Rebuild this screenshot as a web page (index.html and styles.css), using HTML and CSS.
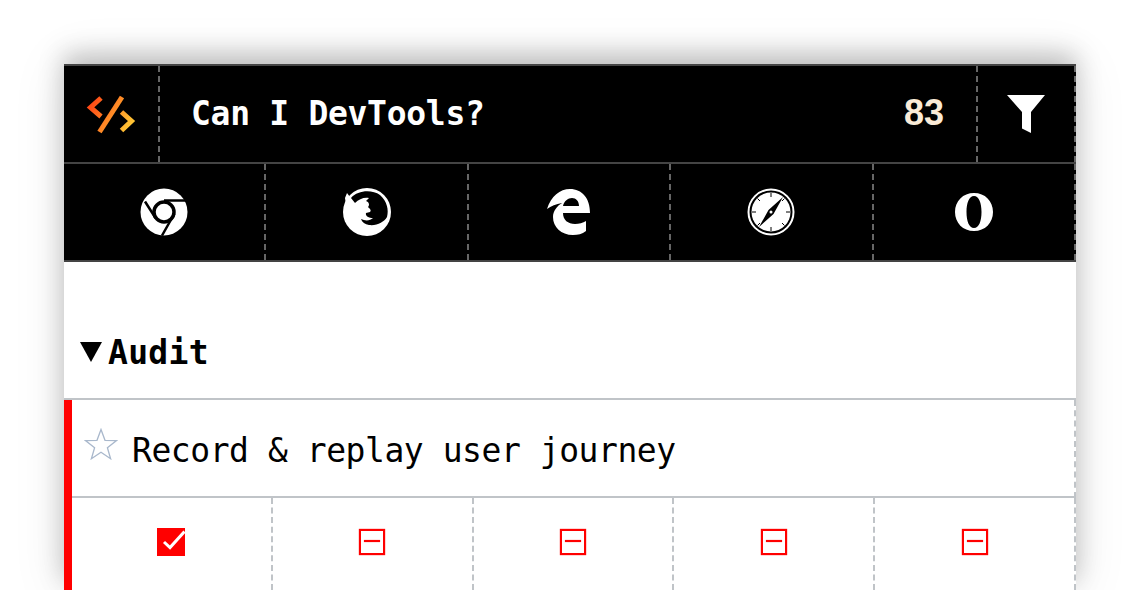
FILE: index.html
```html
<!DOCTYPE html>
<html lang="en">
<head>
    <meta charset="UTF-8">
    <meta name="viewport" content="width=device-width, initial-scale=1.0">
    <title>Can I DevTools?</title>
    <link rel="stylesheet" href="styles.css">
</head>
<body>
    <div class="card">
        <header class="top-bar">
            <div class="logo-cell">
                <svg width="56" height="42" viewBox="0 0 56 42">
                    <defs>
                        <linearGradient id="logo-grad" gradientUnits="userSpaceOnUse" x1="4" y1="8" x2="52" y2="36">
                            <stop offset="0" stop-color="#ff3d12"/>
                            <stop offset="0.5" stop-color="#ff8a26"/>
                            <stop offset="1" stop-color="#ffd338"/>
                        </linearGradient>
                    </defs>
                    <g fill="none" stroke="url(#logo-grad)" stroke-width="5">
                        <path d="M18 5 L7.500 14.500 L18 23.500"/>
                        <path d="M39 4 L16.500 39"/>
                        <path d="M38.500 19 L48.500 28 L38.500 37.500"/>
                    </g>
                </svg>
            </div>
            <h1 class="app-title">Can I DevTools?</h1>
            <div class="count">83</div>
            <div class="filter-cell">
                <svg width="38" height="38" viewBox="0 0 38 38"><path d="M0 0 H38 L24 17 V38 L15 33.500 V17 Z" fill="#fff"/></svg>
            </div>
        </header>

        <nav class="browsers">
            <div class="browser">
                <svg width="48" height="48" viewBox="0 0 48 48">
                    <circle cx="24" cy="24" r="23.500" fill="#fff"/>
                    <circle cx="24" cy="24" r="10" fill="#fff" stroke="#000" stroke-width="3.500"/>
                    <path d="M24 12.500 H47 M15.500 30 L5 13.500 M34.500 25.500 L22 47.500" stroke="#000" stroke-width="2.500" fill="none"/>
                </svg>
            </div>
            <div class="browser">
                <svg width="50" height="48" viewBox="0 0 50 48">
                    <circle cx="25" cy="24" r="24" fill="#fff"/>
                    <path d="M5 5 L8 9 L4 17 L3 10 Z" fill="#fff"/>
                    <path d="M9 10 C16 2 30 1.500 38 7 C45 13 47 22 45 29 C42 34 35 38 27 37 C23 36.500 20 34 19 31 C23 33 28 33 31 30 C27 30 23 28 24 25 L28 24 C30 22 27 20 26 19 C28 17 27 14 24 13 L27 10 C22 9 17 11 13 15 Z" fill="#000"/>
                </svg>
            </div>
            <div class="browser">
                <svg width="44" height="46" viewBox="0 0 44 46">
                    <path d="M0 20 C4 7 13 0 23 0 C35 0 43 9 43 24 H16 C16 31 21 35 28 35 C32 35 36 34 39 32 V42 C35 45 31 46 26 46 C14 46 6 38 6 28 C6 22 10 17 15 14 C9 15 4 17 0 20 Z M16 17 H32 C32 12 29 9 25 9 C21 9 17 12 16 17 Z" fill="#fff" fill-rule="evenodd"/>
                </svg>
            </div>
            <div class="browser">
                <svg width="48" height="48" viewBox="0 0 48 48">
                    <circle cx="24" cy="24" r="22.500" fill="none" stroke="#fff" stroke-width="2"/>
                    <circle cx="24" cy="24" r="19.500" fill="#fff"/>
                    <path d="M24 5 V9 M24 39 V43 M5 24 H9 M39 24 H43 M10.500 10.500 L13 13 M37.500 10.500 L35 13 M10.500 37.500 L13 35 M37.500 37.500 L35 35" stroke="#000" stroke-width="1"/>
                    <path d="M36 9 L26.500 26 L21.500 22 Z M12 39 L21.500 22 L26.500 26 Z" fill="#000"/>
                    <circle cx="24" cy="24" r="1.500" fill="#fff"/>
                </svg>
            </div>
            <div class="browser">
                <svg width="38" height="38" viewBox="0 0 38 38">
                    <path d="M19 0 C30 0 38 8 38 19 C38 30 30 38 19 38 C8 38 0 30 0 19 C0 8 8 0 19 0 Z M19 3 C14 3 11.500 10 11.500 19 C11.500 28 14 35 19 35 C24 35 26.500 28 26.500 19 C26.500 10 24 3 19 3 Z" fill="#fff" fill-rule="evenodd"/>
                </svg>
            </div>
        </nav>

        <section class="category">
            <h2 class="category-title"><span class="arrow"></span>Audit</h2>

            <div class="feature">
                <div class="feature-name">
                    <svg class="star" width="34" height="32" viewBox="0 0 34 32">
                        <path d="M17 1.500 L21 12.300 L32.500 12.600 L23.400 19.700 L26.600 30.700 L17 24.300 L7.400 30.700 L10.600 19.700 L1.500 12.600 L13 12.300 Z" fill="none" stroke="#a9b8cc" stroke-width="1.300"/>
                    </svg>
                    <span>Record &amp; replay user journey</span>
                </div>
                <div class="support-row">
                    <div class="support">
                        <svg width="28" height="28" viewBox="0 0 28 28">
                            <rect width="28" height="28" fill="#f00"/>
                            <path d="M7 14 L13 19.500 L27.500 3.500" fill="none" stroke="#fff" stroke-width="3"/>
                        </svg>
                    </div>
                    <div class="support"><span class="no-support"></span></div>
                    <div class="support"><span class="no-support"></span></div>
                    <div class="support"><span class="no-support"></span></div>
                    <div class="support"><span class="no-support"></span></div>
                </div>
            </div>
        </section>
    </div>
</body>
</html>
```

FILE: styles.css
```css
html, body {
    height: 100%;
}
body {
    margin: 0;
    overflow: hidden;
    background-color: #fff;
    font-family: "DejaVu Sans Mono", "Liberation Mono", monospace;
}
.card {
    margin: 64px 64px 0;
    background: #fff;
    box-shadow: 0 -10px 24px rgba(0,0,0,0.22), 0 0 50px rgba(0,0,0,0.10);
}
.top-bar {
    display: flex;
    align-items: stretch;
    height: 100px;
    box-sizing: border-box;
    background: #000;
    border-top: 2px solid #444;
    border-bottom: 2px solid #444;
}
.logo-cell {
    width: 96px;
    box-sizing: border-box;
    display: flex;
    align-items: center;
    justify-content: center;
    border-right: 2px dashed #666;
}
.app-title {
    flex: 1;
    margin: 0 0 2px;
    padding-left: 31px;
    align-self: center;
    color: #fff;
    font-size: 33px;
    font-weight: bold;
    letter-spacing: -0.3px;
}
.count {
    align-self: center;
    margin: 0 32px 2px 0;
    color: #faebd7;
    font-size: 36px;
    font-weight: bold;
    font-family: "Liberation Sans", sans-serif;
}
.filter-cell {
    width: 100px;
    box-sizing: border-box;
    display: flex;
    align-items: center;
    justify-content: center;
    border-left: 2px dashed #666;
    border-right: 2px dashed #666;
}
.browsers {
    display: grid;
    grid-template-columns: repeat(5, 1fr);
    height: 98px;
    box-sizing: border-box;
    background: #000;
    border-bottom: 2px solid #444;
}
.browser {
    display: flex;
    align-items: center;
    justify-content: center;
    border-right: 2px dashed #666;
}
.category {
    padding-top: 66px;
}
.category-title {
    display: flex;
    align-items: center;
    margin: 0;
    height: 72px;
    padding-left: 16px;
    padding-bottom: 22px;
    box-sizing: border-box;
    border-bottom: 2px solid #c0c4c8;
    font-size: 33px;
    font-weight: bold;
    letter-spacing: 0.3px;
    color: #000;
}
.arrow {
    width: 0;
    height: 0;
    margin-right: 6px;
    border-left: 11px solid transparent;
    border-right: 11px solid transparent;
    border-top: 20px solid #000;
}
.feature {
    border-left: 8px solid #f00;
}
.feature-name {
    display: flex;
    align-items: center;
    gap: 14px;
    height: 98px;
    box-sizing: border-box;
    padding-left: 12px;
    padding-top: 4px;
    border-bottom: 2px solid #c0c4c8;
    border-right: 2px dashed #c0c4c8;
    font-size: 33px;
    letter-spacing: -0.45px;
    color: #000;
}
.star {
    margin-bottom: 12px;
}
.support-row {
    display: grid;
    grid-template-columns: repeat(5, 1fr);
}
.support {
    display: flex;
    align-items: center;
    justify-content: center;
    height: 88px;
    padding-bottom: 4px;
    border-right: 2px dashed #c0c4c8;
}
.no-support {
    position: relative;
    width: 26px;
    height: 26px;
    box-sizing: border-box;
    border: 2px solid #f00;
    box-shadow: 0 0 1px #f00;
}
.no-support::after {
    content: "";
    position: absolute;
    left: 3px;
    right: 3px;
    top: 9px;
    height: 2px;
    background: #f00;
    box-shadow: 0 0 1px #f00;
}
```
